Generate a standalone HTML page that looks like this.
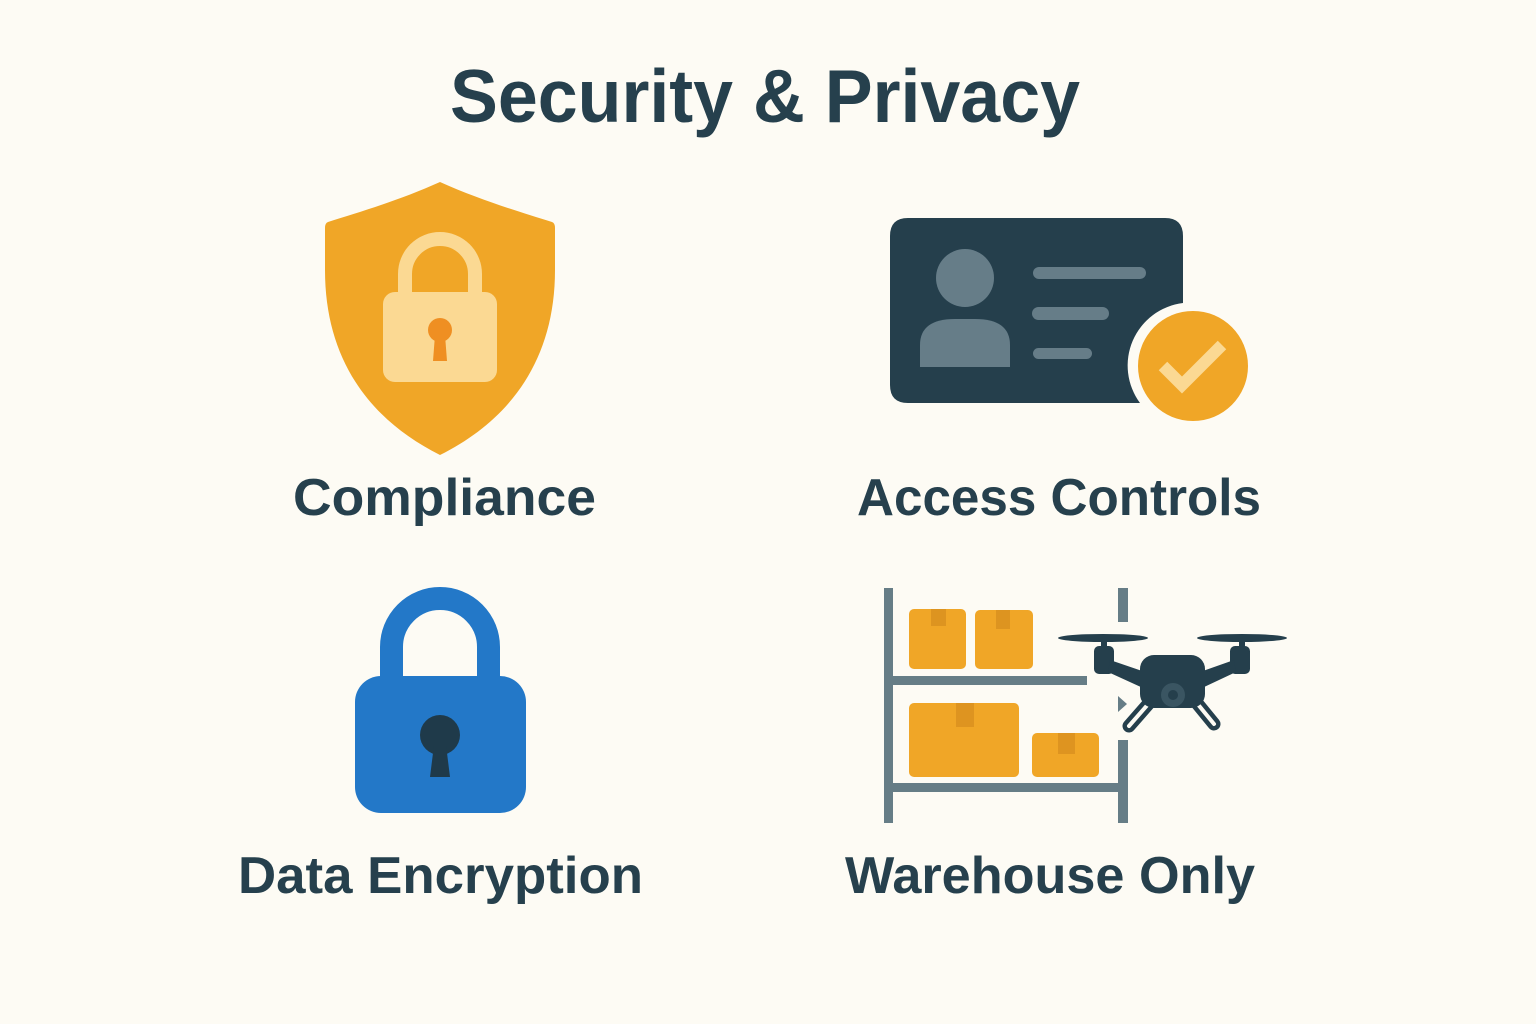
<!DOCTYPE html>
<html><head><meta charset="utf-8"><style>
html,body{margin:0;padding:0;background:#fdfbf4;}
svg{display:block}
text{font-family:"Liberation Sans",sans-serif;font-weight:bold;fill:#26404d}
</style></head><body>
<svg width="1536" height="1024" viewBox="0 0 1536 1024" xmlns="http://www.w3.org/2000/svg">
<rect width="1536" height="1024" fill="#fdfbf4"/>
<text x="450" y="122" font-size="75" textLength="630" lengthAdjust="spacingAndGlyphs">Security &amp; Privacy</text>
<text x="293" y="515" font-size="52" textLength="303" lengthAdjust="spacingAndGlyphs">Compliance</text>
<text x="857" y="515" font-size="52" textLength="404" lengthAdjust="spacingAndGlyphs">Access Controls</text>
<text x="238" y="893" font-size="52" textLength="405" lengthAdjust="spacingAndGlyphs">Data Encryption</text>
<text x="845" y="893" font-size="52" textLength="410" lengthAdjust="spacingAndGlyphs">Warehouse Only</text>

<!-- Shield -->
<path d="M440 182 C400 200 360 212 328 222 Q325 223 325 228 L325 270 C325 360 370 420 440 455 C510 420 555 360 555 270 L555 228 Q555 223 552 222 C520 212 480 200 440 182 Z" fill="#f0a627"/>
<path d="M405 294 V274 A35 35 0 0 1 475 274 V294" fill="none" stroke="#fbd993" stroke-width="14"/>
<rect x="383" y="292" width="114" height="90" rx="12" fill="#fbd993"/>
<circle cx="440" cy="330" r="12" fill="#ef8f22"/>
<path d="M435 335 L445 335 L447 361 L433 361 Z" fill="#ef8f22"/>

<!-- ID card -->
<path d="M908 218 H1165 Q1183 218 1183 236 V303 A63 63 0 0 0 1140 403 H908 Q890 403 890 385 V236 Q890 218 908 218 Z" fill="#253f4c"/>
<circle cx="965" cy="278" r="29" fill="#667d88"/>
<path d="M920 367 V345 Q920 319 955 319 H975 Q1010 319 1010 345 V367 Z" fill="#667d88"/>
<rect x="1033" y="267" width="113" height="12" rx="6" fill="#667d88"/>
<rect x="1032" y="307" width="77" height="13" rx="6.5" fill="#667d88"/>
<rect x="1033" y="348" width="59" height="11" rx="5.5" fill="#667d88"/>
<circle cx="1193" cy="366" r="55" fill="#f0a627"/>
<path d="M1163 366 L1182 385 L1222 345" fill="none" stroke="#fbd993" stroke-width="12"/>

<!-- Blue lock -->
<path d="M391.5 677 V647 A48.5 48.5 0 0 1 488.5 647 V677" fill="none" stroke="#2378c8" stroke-width="23"/>
<rect x="355" y="676" width="171" height="137" rx="26" fill="#2378c8"/>
<circle cx="440" cy="735" r="20" fill="#1f3a4a"/>
<path d="M434 745 H446 L450 777 H430 Z" fill="#1f3a4a"/>

<!-- Warehouse -->
<g fill="#667d86">
<rect x="884" y="588" width="9" height="235"/>
<rect x="1118" y="588" width="10" height="34"/>
<rect x="1118" y="740" width="10" height="83"/>
<rect x="893" y="676" width="194" height="9"/>
<rect x="893" y="783" width="225" height="9"/>
<path d="M1118 696 L1127 704 L1118 712 Z"/>
</g>
<g fill="#f0a627">
<rect x="909" y="609" width="57" height="60" rx="5"/>
<rect x="975" y="610" width="58" height="59" rx="5"/>
<rect x="909" y="703" width="110" height="74" rx="5"/>
<rect x="1032" y="733" width="67" height="44" rx="5"/>
</g>
<g fill="#d9901f" opacity="0.8">
<rect x="931" y="609" width="15" height="17"/>
<rect x="996" y="610" width="14" height="19"/>
<rect x="956" y="703" width="18" height="24"/>
<rect x="1058" y="733" width="17" height="21"/>
</g>
<!-- Drone -->
<g fill="#253f4c">
<ellipse cx="1103" cy="638" rx="45" ry="4"/>
<ellipse cx="1242" cy="638" rx="45" ry="4"/>
<rect x="1101" y="638" width="6" height="10"/>
<rect x="1239" y="638" width="6" height="10"/>
<rect x="1094" y="646" width="20" height="28" rx="5"/>
<rect x="1230" y="646" width="20" height="28" rx="5"/>
<path d="M1110 660 L1145 672 L1143 688 L1108 672 Z"/>
<path d="M1234 660 L1200 672 L1202 688 L1236 672 Z"/>
<path d="M1150 702 L1129 726 M1196 702 L1214 724" stroke="#253f4c" stroke-width="13" stroke-linecap="round" fill="none"/>
<path d="M1150 702 L1129 726 M1196 702 L1214 724" stroke="#fdfbf4" stroke-width="4" stroke-linecap="round" fill="none"/>
<rect x="1140" y="655" width="65" height="53" rx="14"/>
</g>
<circle cx="1173" cy="695" r="12" fill="#3a5562"/>
<circle cx="1173" cy="695" r="5" fill="#253f4c"/>
</svg>
</body></html>
